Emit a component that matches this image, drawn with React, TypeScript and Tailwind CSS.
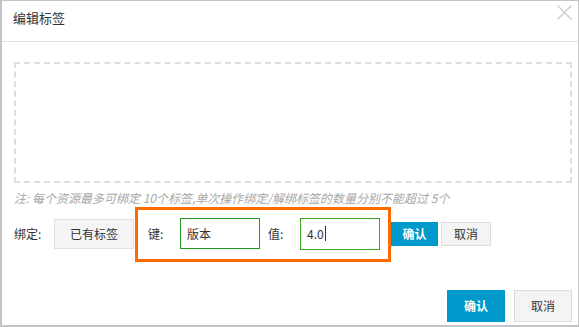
import React from "react";

export default function App() {
  const font = { fontFamily: '"Noto Sans CJK SC", "Noto Sans", sans-serif' };
  return (
    <div
      style={font}
      className="w-[579px] h-[327px] bg-white border border-[#c4c4c4] border-l-2 border-b-2 flex flex-col text-[#333] overflow-hidden"
    >
      {/* header */}
      <div className="h-[41px] border-b border-[#e3e3e3] flex items-start justify-between pl-[11px] pr-[5px] shrink-0">
        <span className="text-[13px] leading-none mt-[10px]">编辑标签</span>
        <svg width="17" height="17" viewBox="0 0 17 17" className="mt-[3px]">
          <path d="M1.5 1.5 L15.5 15.5 M15.5 1.5 L1.5 15.5" stroke="#cfcfcf" strokeWidth="1.6" />
        </svg>
      </div>

      {/* body */}
      <div className="pl-[12px] pr-[6px] pt-[20px] flex flex-col">
        <div className="h-[121px] border-2 border-dashed border-[#dedede]" />
        <div className="mt-[7px] h-[16px] leading-[16px] text-[12px] italic text-[#a8a8a8] whitespace-nowrap">
          注: 每个资源最多可绑定 10个标签,单次操作绑定/解绑标签的数量分别不能超过 5个
        </div>

        <div className="relative mt-[12px] h-[31px] flex items-center text-[12px]">
          <span className="w-[40px]">绑定:</span>
          <div className="w-[80px] h-[30px] bg-[#f5f5f5] border border-[#e2e2e2] flex items-center justify-center">
            已有标签
          </div>
          <span className="ml-[14px] w-[32px]">键:</span>
          <div className="w-[80px] h-[31px] border border-[#1d9a1d] flex items-center pl-[6px]">
            版本
          </div>
          <span className="ml-[8px] w-[32px]">值:</span>
          <div className="w-[80px] h-[32px] border border-[#3ba81c] flex items-center pl-[6px]">
            4.0
            <span className="inline-block w-px h-[15px] bg-[#333] ml-px" />
          </div>
          <div className="ml-[11px] w-[47px] h-[24px] bg-[#0099cc] text-white font-bold flex items-center justify-center">
            确认
          </div>
          <div className="ml-[3px] w-[50px] h-[24px] bg-[#f4f4f4] border border-[#dcdcdc] flex items-center justify-center">
            取消
          </div>

          <div className="absolute left-[121px] top-[-11px] w-[256px] h-[55px] border-[3px] border-[#ff6a00] pointer-events-none" />
        </div>

        <div className="mt-[41px] flex justify-end gap-[9px] text-[12px]">
          <div className="w-[58px] h-[32px] bg-[#0099cc] text-white font-bold flex items-center justify-center">
            确认
          </div>
          <div className="w-[58px] h-[32px] bg-[#f4f4f4] border border-[#dcdcdc] flex items-center justify-center">
            取消
          </div>
        </div>
      </div>
    </div>
  );
}
